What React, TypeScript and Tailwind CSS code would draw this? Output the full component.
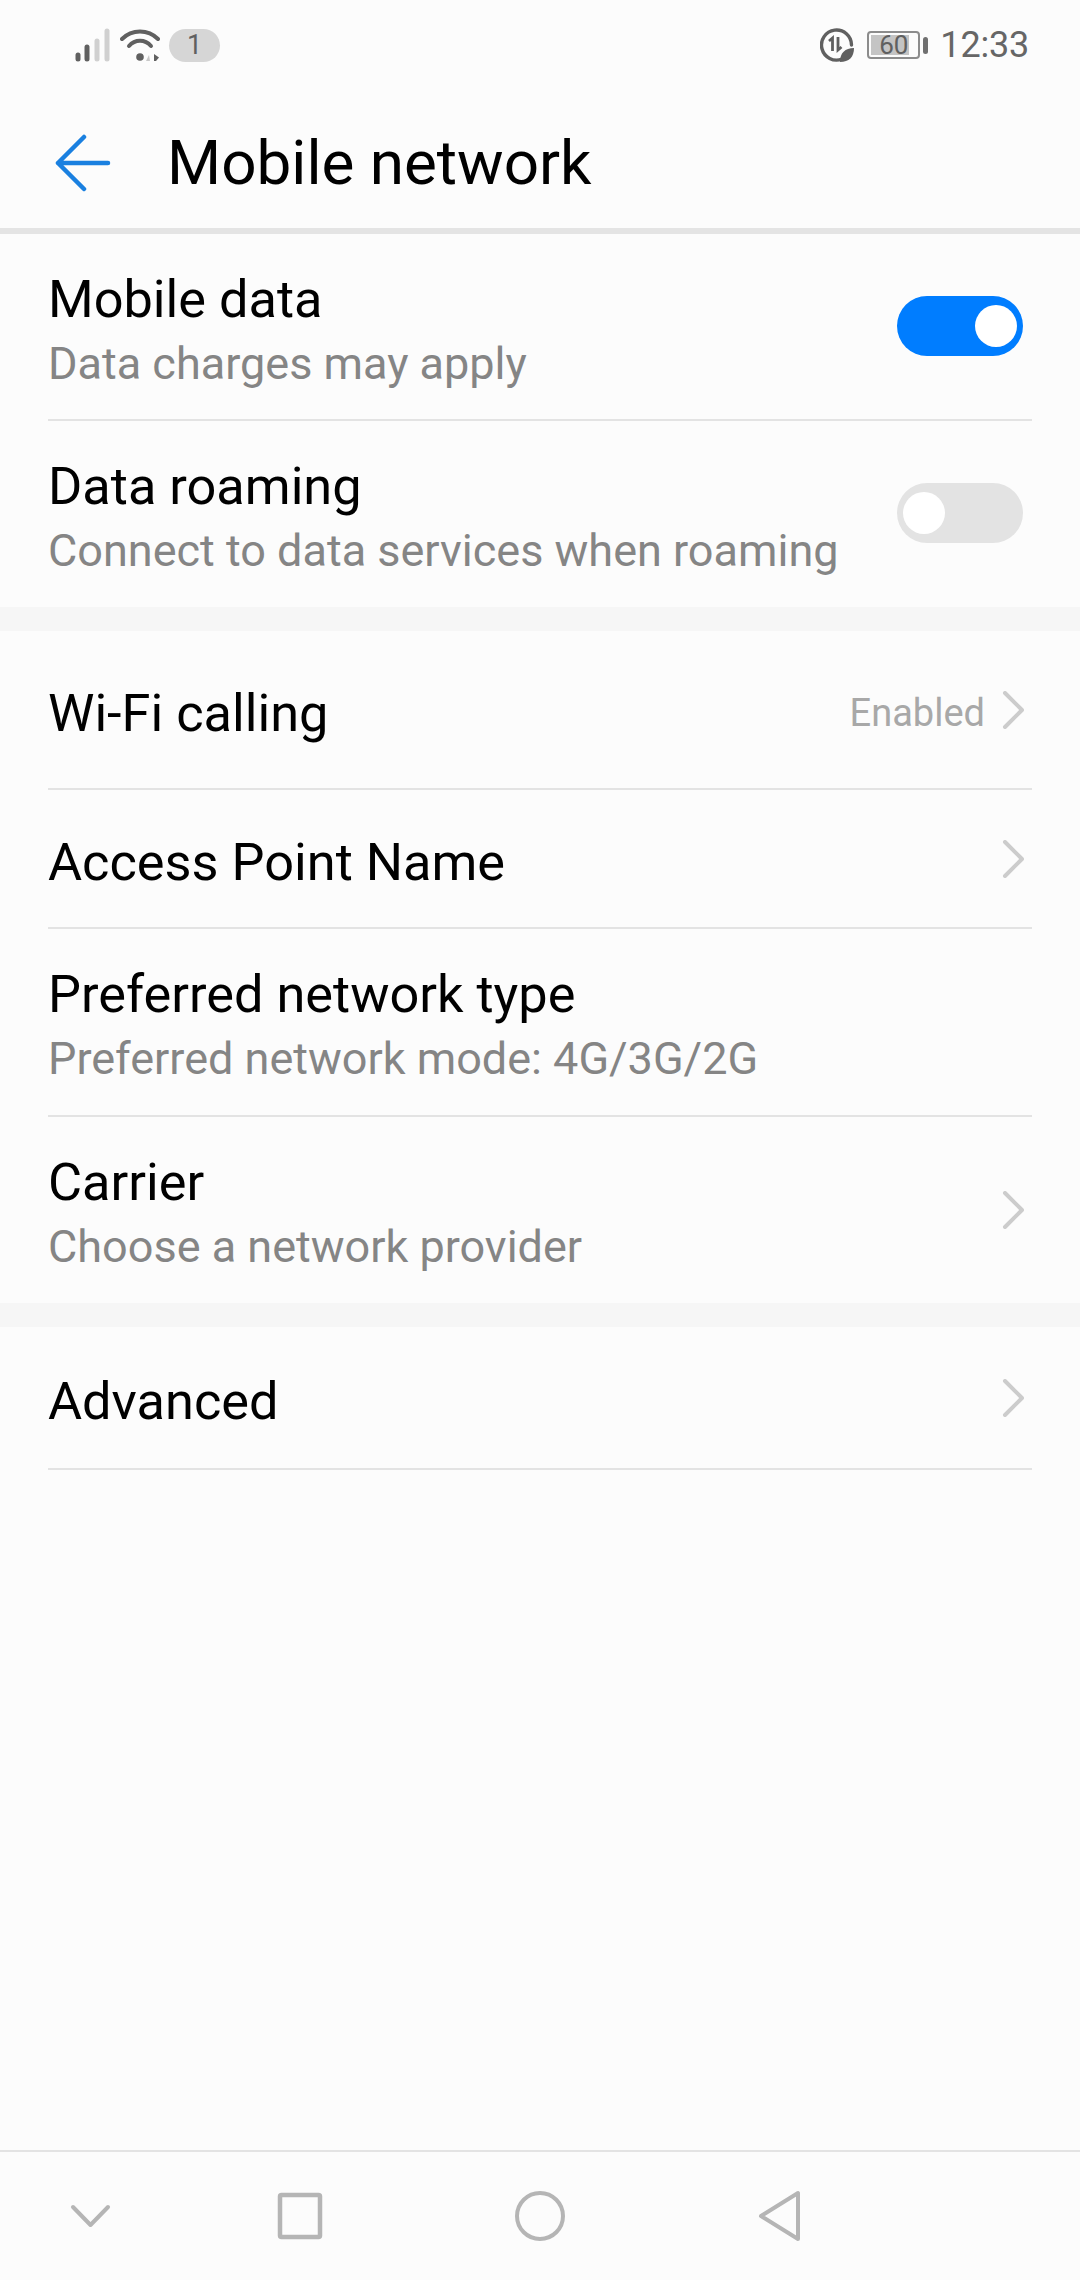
const font = { fontFamily: "Roboto, 'Liberation Sans', sans-serif" };

function Signal() {
  return (
    <svg width="36" height="34" viewBox="0 0 36 34" fill="none" strokeLinecap="round" strokeWidth="4">
      <path d="M3 27V31" stroke="#606060" strokeWidth="5" />
      <path d="M12 19V31" stroke="#606060" strokeWidth="5" />
      <path d="M22 13V31" stroke="#d0d0d0" strokeWidth="5" />
      <path d="M32 3V31" stroke="#d0d0d0" strokeWidth="5" />
    </svg>
  );
}

function Wifi() {
  return (
    <svg width="40" height="34" viewBox="0 0 40 34" fill="none" strokeLinecap="round">
      <path d="M2 11C12 1 28 1 38 11" stroke="#606060" strokeWidth="4" />
      <path d="M9 18C15 11 25 11 31 18" stroke="#606060" strokeWidth="4" />
      <circle cx="20" cy="29" r="3.8" fill="#606060" />
      <path d="M30 33l-4 0 3-6z" fill="#c8c8c8" />
      <path d="M34 26v7h2l3-3.500z" fill="#606060" />
    </svg>
  );
}

function Saver() {
  return (
    <svg width="34" height="34" viewBox="0 0 34 34" fill="none">
      <path d="M22 31A15 15 0 1 1 31.500 17" stroke="#606060" strokeWidth="3.400" strokeLinecap="round" />
      <path d="M9 13l3.500-3v13" stroke="#606060" strokeWidth="2.800" />
      <path d="M18 9v13l3.500-3" stroke="#606060" strokeWidth="2.800" />
      <path d="M20 34c0-9 5-14 14-14 0 9-5 14-14 14z" fill="#606060" />
    </svg>
  );
}

function Chevron() {
  return (
    <svg width="22" height="38" viewBox="0 0 22 38" fill="none">
      <path d="M3 2L20 19L3 36" stroke="#cccccc" strokeWidth="4" strokeLinecap="round" strokeLinejoin="round" />
    </svg>
  );
}

function Divider() {
  return <div className="mx-[48px] h-[2px] bg-[#e3e3e3]" />;
}

function Band() {
  return <div className="h-[24px] bg-[#f6f6f6]" />;
}

function Toggle({ on }: { on?: boolean }) {
  return (
    <div className={`mb-[2px] flex h-[60px] w-[126px] items-center rounded-full px-[6px] ${on ? "justify-end bg-[#007dff]" : "justify-start bg-[#e3e3e3]"}`}>
      <div className="h-[42px] w-[42px] rounded-full bg-white" />
    </div>
  );
}

function Row({ title, sub, h, right, rightClass }: { title: string; sub?: string; h: string; right?: React.ReactNode; rightClass?: string }) {
  return (
    <div className={`flex items-center justify-between pl-[48px] ${rightClass ?? "pr-[56px]"} ${h}`}>
      <div className={`flex flex-col ${sub ? "pt-[10px]" : "pt-[7px]"}`}>
        <div className="text-[52.3px] leading-[64px] text-black">{title}</div>
        {sub && <div className="text-[45px] leading-[66px] text-[#858585]">{sub}</div>}
      </div>
      {right}
    </div>
  );
}

export default function App() {
  return (
    <div style={font} className="flex h-[2280px] w-[1080px] flex-col overflow-hidden bg-[#fcfcfc]">
      <div className="flex h-[90px] items-center justify-between pl-[75px] pr-[51px]">
        <div className="flex items-center gap-[9px]">
          <Signal />
          <Wifi />
          <div className="flex h-[33px] w-[51px] items-center justify-center rounded-full bg-[#d6d6d6] text-[27px] text-[#606060]">1</div>
        </div>
        <div className="flex items-center">
          <Saver />
          <div className="ml-[13px] flex items-center gap-[3px]">
            <div className="relative flex h-[28px] w-[53px] items-center justify-center overflow-hidden rounded-[4px] border-2 border-[#8c8c8c]">
              <div className="absolute inset-y-[2px] left-[2px] w-[38px] bg-[#c4c4c4]" />
              <span className="relative text-[26px] leading-none text-[#606060]">60</span>
            </div>
            <div className="h-[17px] w-[5px] rounded-sm bg-[#707070]" />
          </div>
          <div className="ml-[12px] text-[36px] leading-none tracking-[-0.2px] text-[#666666]">12:33</div>
        </div>
      </div>

      <div className="flex h-[138px] items-center pt-[8px] pl-[54px]">
        <svg width="58" height="58" viewBox="0 0 58 58" fill="none">
          <path d="M30 3L4 29L30 55M4 29H54" stroke="#1a80e0" strokeWidth="4.500" strokeLinecap="round" strokeLinejoin="round" />
        </svg>
        <div className="ml-[55px] text-[62px] leading-none text-black">Mobile network</div>
      </div>
      <div className="h-[6px] bg-[#e4e4e4]" />

      <Row h="h-[185px]" title="Mobile data" sub="Data charges may apply" rightClass="pr-[57px]" right={<Toggle on />} />
      <Divider />
      <Row h="h-[186px]" title="Data roaming" sub="Connect to data services when roaming" rightClass="pr-[57px]" right={<Toggle />} />
      <Band />
      <Row
        h="h-[157px]"
        title="Wi-Fi calling"
        right={
          <div className="flex items-center gap-[17px]">
            <span className="pt-[8px] text-[38px] text-[#a8a8a8]">Enabled</span>
            <Chevron />
          </div>
        }
      />
      <Divider />
      <Row h="h-[137px]" title="Access Point Name" right={<Chevron />} />
      <Divider />
      <Row h="h-[186px]" title="Preferred network type" sub="Preferred network mode: 4G/3G/2G" />
      <Divider />
      <Row h="h-[186px]" title="Carrier" sub="Choose a network provider" right={<Chevron />} />
      <Band />
      <Row h="h-[141px]" title="Advanced" right={<Chevron />} />
      <Divider />

      <div className="flex-1" />
      <div className="h-[2px] bg-[#e3e3e3]" />
      <div className="flex h-[128px] items-center pl-[70px]">
        <svg width="41" height="25" viewBox="0 0 41 25" fill="none">
          <path d="M3 3L20.500 21L38 3" stroke="#b5b5b5" strokeWidth="4" strokeLinecap="round" strokeLinejoin="round" />
        </svg>
        <svg className="ml-[166px]" width="46" height="48" viewBox="0 0 46 48" fill="none">
          <rect x="3" y="3" width="40" height="42" rx="1.500" stroke="#b5b5b5" strokeWidth="4.500" />
        </svg>
        <svg className="ml-[192px]" width="50" height="50" viewBox="0 0 50 50" fill="none">
          <circle cx="25" cy="25" r="23" stroke="#b5b5b5" strokeWidth="4" />
        </svg>
        <svg className="ml-[193px]" width="44" height="52" viewBox="0 0 44 52" fill="none">
          <path d="M40 3V49L3 26Z" stroke="#b5b5b5" strokeWidth="4" strokeLinejoin="round" />
        </svg>
      </div>
    </div>
  );
}
